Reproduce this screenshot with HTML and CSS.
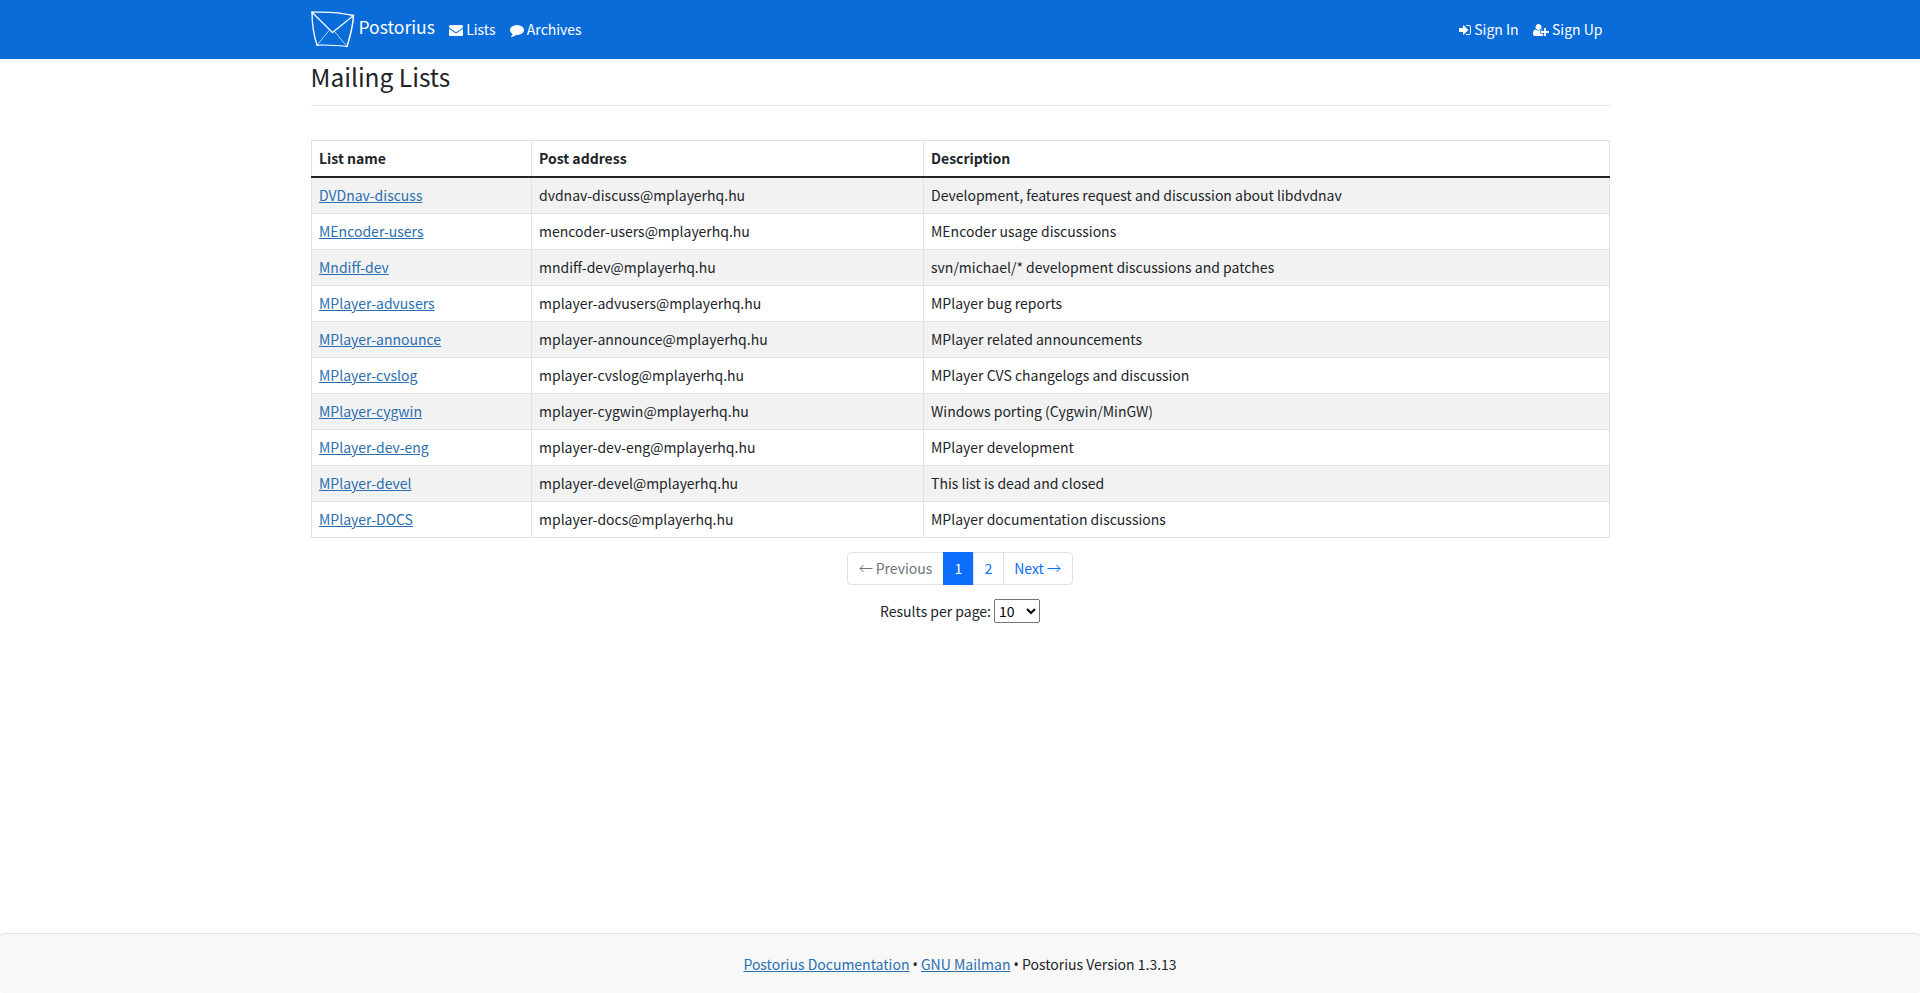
FILE: index.html
```html
<!DOCTYPE html>
<html lang="en">
<head>
    <meta charset="UTF-8">
    <meta name="viewport" content="width=device-width, initial-scale=1.0">
    <title>Mailing Lists</title>
    <link rel="stylesheet" href="styles.css">
</head>
<body>
    <nav class="navbar">
        <div class="container navbar-inner">
            <a class="navbar-brand" href="#">
                <svg class="logo" width="44" height="37" viewBox="0 0 44 37" fill="none" stroke="#fff" stroke-linecap="round" stroke-linejoin="round">
                    <path d="M1 1.2C12 .8 31 1.8 42.5 4.5" stroke-width="1.3"/>
                    <path d="M1 1.2C1 13 3 25 6 34.2" stroke-width="1.3"/>
                    <path d="M6 34.2C16 33.5 27 34.5 36 35.5" stroke-width="1.2"/>
                    <path d="M42.5 4.5C42 14 39 26 36 35.5" stroke-width="1.5"/>
                    <path d="M1 1.2L21.5 21.5L42.5 4.5" stroke-width="1.2"/>
                    <path d="M6 34.2L18 19.5M36 35.5L23.5 20.5" stroke-width=".7"/>
                </svg>
                <span>Postorius</span>
            </a>
            <a class="nav-link" href="#">
                <svg class="icon" width="14" height="14" viewBox="0 0 1792 1792"><path d="M1792 710v794q0 66-47 113t-113 47H160q-66 0-113-47T0 1504V710q44 49 101 87 362 246 497 345 57 42 92.500 65.500t94.500 48 110 24.500h2q51 0 110-24.500t94.500-48T1194 1142q170-123 498-345 57-39 100-87zm0-294q0 79-49 151t-122 123q-376 261-468 325-10 7-42.500 30.500t-54 38-52 32.500-57.500 27-50 9h-2q-23 0-50-9t-57.500-27-52-32.500-54-38T639 1015q-91-64-262-182.500T172 690q-62-42-117-115.500T0 438q0-78 41.500-130T160 256h1472q65 0 112.500 47t47.500 113z"/></svg>
                Lists
            </a>
            <a class="nav-link" href="#">
                <svg class="icon" width="14" height="14" viewBox="0 0 1792 1792"><path d="M1792 896q0 174-120 321.500t-326 233-450 85.500q-70 0-145-8-198 175-460 242-49 14-114 22-17 2-30.500-9t-17.500-29v-1q-3-4-.5-12t2-10 4.500-9.500l6-9 7-8.500 8-9q7-8 31-34.500t34.500-38 31-39.500 32.500-51 27-59 26-76q-157-89-247.500-220T0 896q0-130 71-248.500t191-204.500 286-136.500T896 256t348 50.500T1530 443t191 204.500 71 248.500z"/></svg>
                Archives
            </a>
            <a class="nav-link nav-right" href="#">
                <svg class="icon" width="12" height="14" viewBox="0 0 1536 1792"><path d="M1184 896q0 26-19 45l-544 544q-19 19-45 19t-45-19-19-45v-288H64q-26 0-45-19t-19-45V704q0-26 19-45t45-19h448V352q0-26 19-45t45-19 45 19l544 544q19 19 19 45zm352-352v704q0 119-84.500 203.500T1248 1536H928q-13 0-22.500-9.500T896 1504q0-4-1-20t-.5-26.500 3-23.500 10-19.500 20.500-6.500h320q66 0 113-47t47-113V544q0-66-47-113t-113-47H936l-11.500-1-11.500-3-8-5.500-7-9-2-13.500q0-4-1-20t-.5-26.500 3-23.500 10-19.500T928 256h320q119 0 203.500 84.500T1536 544z"/></svg>
                Sign In
            </a>
            <a class="nav-link" href="#">
                <svg class="icon" width="16" height="14" viewBox="0 0 2048 1792"><path d="M704 896q-159 0-271.500-112.500T320 512t112.500-271.500T704 128t271.500 112.500T1088 512 975.500 783.500 704 896zm960 128h352q13 0 22.500 9.500t9.500 22.500v192q0 13-9.500 22.500t-22.500 9.500h-352v352q0 13-9.500 22.500t-22.500 9.500h-192q-13 0-22.500-9.500t-9.500-22.500v-352h-352q-13 0-22.500-9.500t-9.500-22.500v-192q0-13 9.500-22.500t22.500-9.500h352V672q0-13 9.500-22.500t22.500-9.500h192q13 0 22.500 9.500t9.500 22.500v352zm-736 224q0 52 38 90t90 38h256v238q-68 50-171 50H267q-121 0-194-69T0 1405q0-53 3.500-103.500t14-109T44 1084t43-97.500 62-81 85.500-53.500T346 832q19 0 39 17 79 61 154.500 91.500T704 971t164.500-30.500T1023 849q20-17 39-17 132 0 217 96h-223q-52 0-90 38t-38 90v192z"/></svg>
                Sign Up
            </a>
        </div>
    </nav>

    <main class="container">
        <h1 class="page-title">Mailing Lists</h1>
        <table class="table">
            <thead>
                <tr><th class="col-name">List name</th><th class="col-address">Post address</th><th>Description</th></tr>
            </thead>
            <tbody>
                <tr><td><a href="#">DVDnav-discuss</a></td><td>dvdnav-discuss@mplayerhq.hu</td><td>Development, features request and discussion about libdvdnav</td></tr>
                <tr><td><a href="#">MEncoder-users</a></td><td>mencoder-users@mplayerhq.hu</td><td>MEncoder usage discussions</td></tr>
                <tr><td><a href="#">Mndiff-dev</a></td><td>mndiff-dev@mplayerhq.hu</td><td>svn/michael/* development discussions and patches</td></tr>
                <tr><td><a href="#">MPlayer-advusers</a></td><td>mplayer-advusers@mplayerhq.hu</td><td>MPlayer bug reports</td></tr>
                <tr><td><a href="#">MPlayer-announce</a></td><td>mplayer-announce@mplayerhq.hu</td><td>MPlayer related announcements</td></tr>
                <tr><td><a href="#">MPlayer-cvslog</a></td><td>mplayer-cvslog@mplayerhq.hu</td><td>MPlayer CVS changelogs and discussion</td></tr>
                <tr><td><a href="#">MPlayer-cygwin</a></td><td>mplayer-cygwin@mplayerhq.hu</td><td>Windows porting (Cygwin/MinGW)</td></tr>
                <tr><td><a href="#">MPlayer-dev-eng</a></td><td>mplayer-dev-eng@mplayerhq.hu</td><td>MPlayer development</td></tr>
                <tr><td><a href="#">MPlayer-devel</a></td><td>mplayer-devel@mplayerhq.hu</td><td>This list is dead and closed</td></tr>
                <tr><td><a href="#">MPlayer-DOCS</a></td><td>mplayer-docs@mplayerhq.hu</td><td>MPlayer documentation discussions</td></tr>
            </tbody>
        </table>

        <div class="pagination">
            <span class="page-link page-prev disabled"><svg class="arrow" width="14" height="9" viewBox="0 0 14 9"><path d="M13.5 4.5H1M4.5 1L1 4.5L4.5 8"/></svg>Previous</span>
            <a class="page-link page-num active" href="#">1</a>
            <a class="page-link page-num" href="#">2</a>
            <a class="page-link page-next" href="#">Next<svg class="arrow" width="14" height="9" viewBox="0 0 14 9"><path d="M.5 4.5H13M9.5 1L13 4.5L9.5 8"/></svg></a>
        </div>

        <form class="per-page">
            <label for="count">Results per page:</label>
            <select id="count">
                <option>10</option>
                <option>50</option>
                <option>100</option>
                <option>200</option>
            </select>
        </form>
    </main>

    <footer class="footer">
        <a href="#">Postorius Documentation</a> <span class="bullet">&bull;</span> <a href="#">GNU Mailman</a> <span class="bullet">&bull;</span> Postorius Version 1.3.13
    </footer>
</body>
</html>
```
FILE: styles.css
```css
* {
    box-sizing: border-box;
}
body {
    margin: 0;
    min-height: 100vh;
    display: flex;
    flex-direction: column;
    font-family: "Source Sans Pro", "Noto Sans CJK SC", sans-serif;
    font-size: 14px;
    line-height: 20px;
    color: #212529;
    background-color: #fff;
}
a {
    color: #2a6fb0;
}
.container {
    width: 1299px;
    margin: 0 auto;
}
.navbar {
    height: 59px;
    background-color: #0a6cd9;
}
.navbar-inner {
    display: flex;
    align-items: center;
    height: 59px;
}
.navbar a {
    display: flex;
    align-items: center;
    color: #fff;
    text-decoration: none;
}
.navbar-brand {
    font-size: 17.5px;
    gap: 4px;
    margin-right: 7px;
}
.navbar-brand span {
    padding-bottom: 5px;
}
.navbar .nav-link {
    gap: 3.3px;
    padding: 0 7px 2px;
}
.nav-right {
    margin-left: auto;
}
.icon {
    fill: #fff;
    margin-top: 2px;
}
.page-title {
    margin: 0 0 34px;
    padding: 2px 0 12px;
    border-bottom: 1px solid #e9eaeb;
    font-size: 24.5px;
    font-weight: 400;
    line-height: 32px;
}
.table {
    width: 100%;
    border-collapse: collapse;
    table-layout: fixed;
}
.table th,
.table td {
    height: 36px;
    padding: 0 7px 1px 7.5px;
    border: 1px solid #dee2e6;
    text-align: left;
}
.table thead th {
    border-bottom: 2px solid #212529;
}
.table tbody tr:first-child td {
    height: 37px;
}
.table tbody tr:nth-child(odd) {
    background-color: #f2f2f2;
}
.col-name {
    width: 220px;
}
.col-address {
    width: 392px;
}
.pagination {
    display: flex;
    justify-content: center;
    margin-top: 14px;
}
.page-link {
    display: flex;
    align-items: center;
    justify-content: center;
    gap: 3px;
    height: 33px;
    margin-left: -1px;
    padding-bottom: 1px;
    border: 1px solid #dee2e6;
    color: #0d6efd;
    text-decoration: none;
}
.page-prev {
    width: 97px;
    padding-left: 1px;
    border-radius: 4px 0 0 4px;
}
.page-next {
    width: 70px;
    border-radius: 0 4px 4px 0;
}
.page-num {
    width: 31px;
    padding-left: 1px;
}
.disabled {
    color: #6c757d;
}
.active {
    background-color: #0d6efd;
    border-color: #0d6efd;
    color: #fff;
}
.arrow {
    fill: none;
    stroke: currentColor;
    margin-top: 1px;
}
.per-page {
    display: flex;
    justify-content: center;
    align-items: center;
    gap: 3px;
    margin-top: 14px;
}
.per-page select {
    width: 46px;
    height: 24px;
    padding: 0;
    font-family: inherit;
    font-size: 14px;
}
.footer {
    height: 60px;
    margin-top: auto;
    padding-top: 20px;
    border: 1px solid #dfdfdf;
    border-width: 1px 0 0;
    border-radius: 4px;
    background-color: #f8f8f8;
    text-align: center;
}
.bullet {
    font-family: "Noto Sans", sans-serif;
}
```
